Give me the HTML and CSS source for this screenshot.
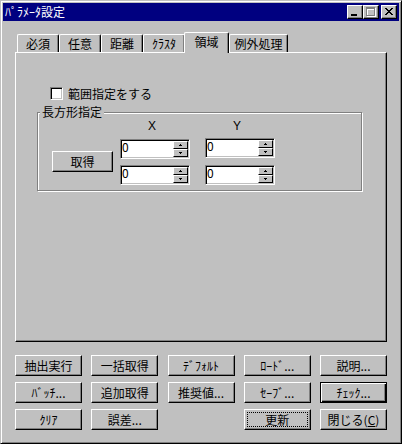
FILE: index.html
```html
<!DOCTYPE html>
<html lang="ja">
<head>
<meta charset="utf-8">
<title>ﾊﾟﾗﾒｰﾀ設定</title>
<link rel="stylesheet" href="styles.css">
</head>
<body>
<div class="window">
  <div class="titlebar">
    <span class="title">ﾊﾟﾗﾒｰﾀ設定</span>
    <div class="tb-btns">
      <span class="tbtn"><svg width="14" height="12" viewBox="0 0 14 12" shape-rendering="crispEdges"><rect x="3" y="8" width="6" height="2" fill="#000"/></svg></span>
      <span class="tbtn"><svg width="14" height="12" viewBox="0 0 14 12" shape-rendering="crispEdges"><g fill="#fff"><rect x="3" y="2" width="9" height="2"/><rect x="3" y="2" width="1" height="9"/><rect x="11" y="2" width="1" height="9"/><rect x="3" y="10" width="9" height="1"/></g><g fill="#808080"><rect x="2" y="1" width="9" height="2"/><rect x="2" y="1" width="1" height="9"/><rect x="10" y="1" width="1" height="9"/><rect x="2" y="9" width="9" height="1"/></g></svg></span>
      <span class="tbtn close"><svg width="14" height="12" viewBox="0 0 14 12" shape-rendering="crispEdges"><g fill="#000"><rect x="3" y="2" width="2" height="1"/><rect x="9" y="2" width="2" height="1"/><rect x="4" y="3" width="2" height="1"/><rect x="8" y="3" width="2" height="1"/><rect x="5" y="4" width="4" height="1"/><rect x="6" y="5" width="2" height="1"/><rect x="5" y="6" width="4" height="1"/><rect x="4" y="7" width="2" height="1"/><rect x="8" y="7" width="2" height="1"/><rect x="3" y="8" width="2" height="1"/><rect x="9" y="8" width="2" height="1"/></g></svg></span>
    </div>
  </div>
  <div class="client">
    <div class="tabs">
      <span class="tab w42">必須</span>
      <span class="tab w42">任意</span>
      <span class="tab w42">距離</span>
      <span class="tab w42">ｸﾗｽﾀ</span>
      <span class="tab sel">領域</span>
      <span class="tab w59">例外処理</span>
    </div>
    <div class="panel">
      <div class="check"><span class="cbox"></span><span>範囲指定をする</span></div>
      <div class="group">
        <span class="legend">長方形指定</span>
        <button class="btn getbtn">取得</button>
        <div class="grid">
          <span class="axis">X</span>
          <span class="axis">Y</span>
          <div class="field"><span class="val">0</span><span class="spin"><span class="sbtn"><svg width="13" height="6" viewBox="0 0 13 6" shape-rendering="crispEdges"><rect x="6" y="2" width="1" height="1"/><rect x="5" y="3" width="3" height="1"/></svg></span><span class="sbtn"><svg width="13" height="6" viewBox="0 0 13 6" shape-rendering="crispEdges"><rect x="5" y="2" width="3" height="1"/><rect x="6" y="3" width="1" height="1"/></svg></span></span></div>
          <div class="field up"><span class="val">0</span><span class="spin"><span class="sbtn"><svg width="13" height="6" viewBox="0 0 13 6" shape-rendering="crispEdges"><rect x="6" y="2" width="1" height="1"/><rect x="5" y="3" width="3" height="1"/></svg></span><span class="sbtn"><svg width="13" height="6" viewBox="0 0 13 6" shape-rendering="crispEdges"><rect x="5" y="2" width="3" height="1"/><rect x="6" y="3" width="1" height="1"/></svg></span></span></div>
          <div class="field low"><span class="val">0</span><span class="spin"><span class="sbtn"><svg width="13" height="6" viewBox="0 0 13 6" shape-rendering="crispEdges"><rect x="6" y="2" width="1" height="1"/><rect x="5" y="3" width="3" height="1"/></svg></span><span class="sbtn"><svg width="13" height="6" viewBox="0 0 13 6" shape-rendering="crispEdges"><rect x="5" y="2" width="3" height="1"/><rect x="6" y="3" width="1" height="1"/></svg></span></span></div>
          <div class="field low"><span class="val">0</span><span class="spin"><span class="sbtn"><svg width="13" height="6" viewBox="0 0 13 6" shape-rendering="crispEdges"><rect x="6" y="2" width="1" height="1"/><rect x="5" y="3" width="3" height="1"/></svg></span><span class="sbtn"><svg width="13" height="6" viewBox="0 0 13 6" shape-rendering="crispEdges"><rect x="5" y="2" width="3" height="1"/><rect x="6" y="3" width="1" height="1"/></svg></span></span></div>
        </div>
      </div>
    </div>
    <div class="buttons">
      <button class="btn">抽出実行</button>
      <button class="btn">一括取得</button>
      <button class="btn">ﾃﾞﾌｫﾙﾄ</button>
      <button class="btn">ﾛｰﾄﾞ...</button>
      <button class="btn">説明...</button>
      <button class="btn">ﾊﾞｯﾁ...</button>
      <button class="btn">追加取得</button>
      <button class="btn">推奨値...</button>
      <button class="btn">ｾｰﾌﾞ...</button>
      <button class="btn def">ﾁｪｯｸ...</button>
      <button class="btn">ｸﾘｱ</button>
      <button class="btn">誤差...</button>
      <button class="btn focus col4"><span>更新</span></button>
      <button class="btn">閉じる(<u>C</u>)</button>
    </div>
  </div>
</div>
</body>
</html>
```
FILE: styles.css
```css
html, body {
  margin: 0;
  background: #c0c0c0;
}
body {
  font: 12px/14px "Noto Sans CJK JP", sans-serif;
  color: #000;
}
.window {
  width: 402px;
  height: 444px;
  box-sizing: border-box;
  border: 1px solid;
  border-color: #c0c0c0 #000 #000 #c0c0c0;
  box-shadow: inset 1px 1px #fff, inset -1px -1px #808080;
  padding: 2px;
  background: #c0c0c0;
}
.titlebar {
  height: 18px;
  background: #000080;
  color: #fff;
  display: flex;
  align-items: center;
  padding: 0 2px;
}
.title {
  flex: 1;
  line-height: 18px;
}
.tb-btns {
  display: flex;
}
.tbtn {
  width: 16px;
  height: 14px;
  box-sizing: border-box;
  background: #c0c0c0;
  border: 1px solid;
  border-color: #fff #000 #000 #fff;
  box-shadow: inset -1px -1px #808080;
  display: flex;
}
.tbtn.close {
  margin-left: 2px;
}
.client {
  padding: 11px 0 0 12px;
}
.tabs {
  display: flex;
  align-items: flex-end;
  height: 20px;
  padding-left: 2px;
  position: relative;
  z-index: 1;
}
.tab {
  height: 18px;
  box-sizing: border-box;
  border: 1px solid;
  border-color: #fff #000 transparent #fff;
  border-bottom: 0;
  border-radius: 2px 2px 0 0;
  box-shadow: inset -1px 0 #808080;
  text-align: center;
  line-height: 17px;
  background: #c0c0c0;
}
.w42 { width: 42px; }
.w59 { width: 59px; }
.tab.sel {
  width: 45px;
  height: 21px;
  margin-left: -1px;
  margin-bottom: -1px;
}
.panel {
  width: 372px;
  height: 290px;
  box-sizing: border-box;
  border: 1px solid;
  border-color: #fff #000 #000 #fff;
  box-shadow: inset -1px -1px #808080;
  padding: 34px 0 0 21px;
}
.check {
  display: flex;
  align-items: center;
  gap: 5px;
  margin-left: 13px;
  height: 13px;
  line-height: 13px;
}
.cbox {
  width: 13px;
  height: 13px;
  box-sizing: border-box;
  background: #fff;
  border: 1px solid;
  border-color: #808080 #fff #fff #808080;
  box-shadow: inset 1px 1px #000, inset -1px -1px #c0c0c0;
}
.group {
  position: relative;
  width: 325px;
  height: 79px;
  box-sizing: border-box;
  border: 1px solid #808080;
  box-shadow: inset 1px 1px #fff, 1px 1px #fff;
  margin-top: 12px;
  padding: 5px 0 0 14px;
  display: flex;
  align-items: flex-start;
}
.legend {
  position: absolute;
  left: 2px;
  top: -9px;
  padding: 0 2px;
  background: #c0c0c0;
  line-height: 16px;
}
.btn {
  appearance: none;
  margin: 0;
  padding: 0;
  box-sizing: border-box;
  border: 1px solid;
  border-color: #fff #000 #000 #fff;
  box-shadow: inset -1px -1px #808080;
  background: #c0c0c0;
  color: #000;
  font: 12px/14px "Noto Sans CJK JP", sans-serif;
  display: flex;
  align-items: center;
  justify-content: center;
}
.getbtn {
  width: 61px;
  height: 21px;
  margin: 33px 7px 0 0;
}
.grid {
  display: grid;
  grid-template-columns: 70px 70px;
  grid-template-rows: 16px 20px 21px;
  column-gap: 15px;
  row-gap: 5px;
}
.axis {
  text-align: center;
  padding-right: 6px;
  line-height: 16px;
  font-family: "Liberation Sans", sans-serif;
}
.field {
  height: 20px;
  box-sizing: border-box;
  background: #fff;
  border: 1px solid;
  border-color: #808080 #fff #fff #808080;
  box-shadow: inset 1px 1px #000, inset -1px -1px #c0c0c0;
  padding: 1px;
  display: flex;
}
.field.up {
  margin-top: -1px;
}
.field.low {
  align-self: end;
}
.val {
  flex: 1;
  line-height: 12px;
  font-size: 12px;
}
.spin {
  width: 15px;
  display: flex;
  flex-direction: column;
}
.sbtn {
  height: 8px;
  box-sizing: border-box;
  background: #c0c0c0;
  border: 1px solid;
  border-color: #fff #000 #000 #fff;
  display: flex;
}
.buttons {
  margin-top: 13px;
  width: 372px;
  display: grid;
  grid-template-columns: repeat(5, 67px);
  grid-auto-rows: 21px;
  justify-content: space-between;
  row-gap: 6px;
}
.col4 {
  grid-column: 4;
}
.btn.def {
  border-color: #000;
  box-shadow: inset 1px 1px #fff, inset -1px -1px #000, inset -2px -2px #808080;
}
.btn.focus span {
  flex: 1;
  align-self: stretch;
  margin: 2px;
  border: 1px dotted #000;
  display: flex;
  align-items: center;
  justify-content: center;
}
```
